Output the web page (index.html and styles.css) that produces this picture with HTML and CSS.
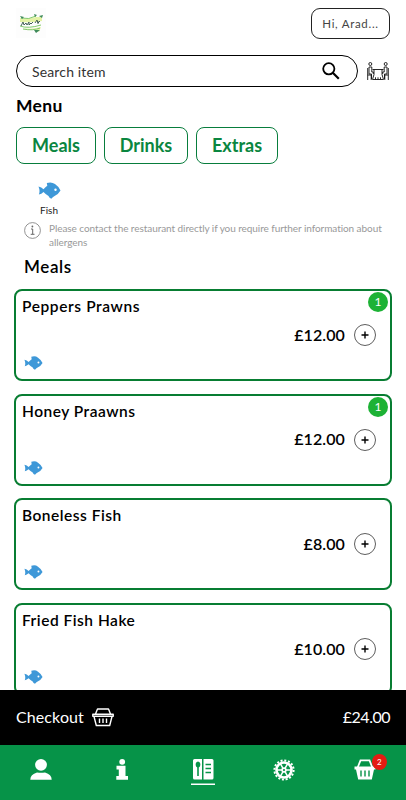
FILE: index.html
```html
<!DOCTYPE html>
<html lang="en">
<head>
<meta charset="utf-8">
<title>Menu</title>
<link rel="stylesheet" href="styles.css">
</head>
<body>
<svg class="defs" aria-hidden="true">
  <symbol id="fish" viewBox="0 0 22 17">
    <path fill="#3e98d8" d="M0 4.500Q3 5 5 7.200Q7 5 8.800 3.800L8.300 1Q13-.6 16.500 2Q20.300 4.500 22 8.500Q20 12 16.500 13.800Q14.500 14.800 12.800 16.700Q10.800 16 10 14Q7.200 12.400 5 10Q3 12 .4 12.500Q1.800 8.700 0 4.500Z"/>
    <circle cx="17" cy="7.800" r="1.200" fill="#fff"/>
  </symbol>
  <symbol id="plus" viewBox="0 0 22 22">
    <circle cx="11" cy="11" r="10.500" fill="none" stroke="#333" stroke-width=".8"/>
    <path d="M7.500 11h7M11 7.500v7" stroke="#000" stroke-width="1.400"/>
  </symbol>
</svg>
<div class="app">
  <header class="top">
    <svg class="logo" viewBox="0 0 30 30">
      <rect width="30" height="30" fill="#fdfdfd"/>
      <path d="M4 10Q11 12 20 9L26 9 26 13Q14 15 4 14ZM7 20Q14 22 25 19L23 24 20 21Q13 23 7 20Z" fill="#e4f2a5"/>
      <path d="M5 10Q13 12 20 8M4 18Q12 21 25 17M7 21Q17 23 24 20" fill="none" stroke="#82c96b"/>
      <path d="M4 8l4 1-2 2zM18 6l3 1-2 2zM23 8l4-1-1 3zM18 22l6 0-4 3z" fill="#3f8a5a"/>
      <path d="M5 18l2-4 1 3 2-2 1 2 2-3v3l2-2v1l2-2M19 15l2-3 1 3 2-2M22 13v3" fill="none" stroke="#35554b" stroke-width=".9"/>
    </svg>
    <button class="user">Hi, Arad...</button>
  </header>
  <div class="search-row">
    <div class="search"><span>Search item</span>
      <svg class="lens" viewBox="0 0 18 18"><circle cx="6.800" cy="6.800" r="5.600" fill="none" stroke="#000" stroke-width="1.800"/><path d="M10.800 10.800l6 6" stroke="#000" stroke-width="2.200"/></svg>
    </div>
    <svg class="table" viewBox="0 0 22 19" fill="none" stroke="#111" stroke-width=".9">
      <circle cx="3.300" cy="2" r="1.500"/><circle cx="18.700" cy="2" r="1.500"/>
      <path d="M2 5h2.800v5h1.500v2M2 5v7h2.500v5M.7 6v12M.7 13h3.500v5M20 5h-2.800v5h-1.500v2M20 5v7h-2.500v5M21.300 6v12M21.300 13h-3.500v5M5.500 7.500h11M7 7.500v5l-1.500 5h11L15 12.500v-5M8.500 17.300v-2M11 17.300v-2M13.500 17.300v-2"/>
    </svg>
  </div>
  <h1>Menu</h1>
  <nav class="tabs"><button class="tab meals">Meals</button><button class="tab drinks">Drinks</button><button class="tab extras">Extras</button></nav>
  <div class="allergen"><svg><use href="#fish"/></svg><span>Fish</span></div>
  <div class="notice">
    <svg viewBox="0 0 17 17"><circle cx="8.500" cy="8.500" r="7.900" fill="none" stroke="#777" stroke-width=".8"/><path d="M7 7h1.700v5M6.700 12.300h3.800" fill="none" stroke="#666"/><circle cx="8.400" cy="4.500" r=".9" fill="#666"/></svg>
    <p>Please contact the restaurant directly if you require further information about<br>allergens</p>
  </div>
  <h2>Meals</h2>
  <main class="list">
    <article class="card"><h3 class="wide">Peppers Prawns</h3><span class="count">1</span><div class="buy"><span>£12.00</span><svg><use href="#plus"/></svg></div><svg class="tag"><use href="#fish"/></svg></article>
    <article class="card"><h3>Honey Praawns</h3><span class="count">1</span><div class="buy"><span>£12.00</span><svg><use href="#plus"/></svg></div><svg class="tag"><use href="#fish"/></svg></article>
    <article class="card"><h3>Boneless Fish</h3><div class="buy"><span>£8.00</span><svg><use href="#plus"/></svg></div><svg class="tag"><use href="#fish"/></svg></article>
    <article class="card"><h3>Fried Fish Hake</h3><div class="buy"><span>£10.00</span><svg><use href="#plus"/></svg></div><svg class="tag"><use href="#fish"/></svg></article>
  </main>
  <div class="checkout">
    <span class="checkout-label">Checkout</span>
    <svg viewBox="0 0 22 19" fill="none" stroke="#fff" stroke-width="1.400" stroke-linejoin="round"><path d="M3.500 6L5.500 1h11l2 5M.8 6.300h20.400v2H.8zM2 8.500l2.300 9h13.400l2.300-9M7.500 10.500v4.500M11 10.500v4.500M14.500 10.500v4.500"/></svg>
    <span class="total">£24.00</span>
  </div>
  <footer class="bottom">
    <a><svg viewBox="0 0 24 30" fill="#fff"><circle cx="12" cy="9.800" r="5.900"/><path d="M1.300 24.700Q1.300 19.500 8 17.500Q12 18.200 16 17.500Q22.700 19.500 22.700 24.700Z"/></svg></a>
    <a><svg viewBox="0 0 24 30" fill="#fff"><circle cx="12.200" cy="6.800" r="2.900"/><path d="M6.500 10.800h9v10.200H18v3.800H6.300V21h2.500v-6.500H6.500z"/></svg></a>
    <a><svg viewBox="0 0 24 30"><path d="M3.500 4H11v20.500H3.500Q2 24.500 2 23V5.500Q2 4 3.500 4zM12.500 4H21Q22.500 4 22.500 5.500V23Q22.500 24.500 21 24.500H12.500zM0 28.500h24v1.500H0z" fill="#fff"/><path d="M14.500 9.500h5.500M14.500 13.500h5.500M14.500 17.500h5.500M7 11v10" stroke="#069348" stroke-width="1.600"/><ellipse cx="7" cy="9.500" rx="2.300" ry="3" fill="#069348"/></svg></a>
    <a><svg viewBox="0 0 24 30" fill="none" stroke="#fff"><circle cx="12" cy="15" r="9.600" stroke-width="2" stroke-dasharray="2 1.770"/><circle cx="12" cy="15" r="7.500" stroke-width="2.600"/><circle cx="12" cy="15" r="1.900" stroke-width="1.600"/><path d="M14 15h5M13 16.730l2.500 4.330M11 16.730l-2.500 4.330M10 15H5M11 13.270L8.500 8.940M13 13.270l2.500-4.330" stroke-width="1.500"/></svg></a>
    <a class="basket"><svg viewBox="0 0 24 30"><path d="M4.500 13L7.500 5.300h9l3 7.700" fill="none" stroke="#fff" stroke-width="1.800"/><path d="M1.500 11.500h21v3H21l-2.200 10H5.200L3 14.500H1.500z" fill="#fff"/><path d="M8 15.500v6M12 15.500v6M16 15.500v6" stroke="#069348" stroke-width="1.400"/></svg><b>2</b></a>
  </footer>
</div>
</body>
</html>
```
FILE: styles.css
```css
* { box-sizing: border-box; }
body { margin: 0; background: #fff; color: #000; font-family: Lato, "Liberation Sans", sans-serif; }
h1, h2, h3, p { margin: 0; }
button { background: #fff; font-family: inherit; padding: 0; }
svg { display: block; flex: none; }
.defs { position: absolute; width: 0; height: 0; }
.app { height: 800px; display: flex; flex-direction: column; overflow: hidden; }
.top { height: 55px; flex: none; display: flex; justify-content: space-between; padding: 8px 16px 0; }
.logo { width: 30px; height: 30px; }
.user { width: 79px; height: 31px; border: 1px solid #222; border-radius: 9px; font-size: 11.5px; letter-spacing: .7px; color: #444; }
.search-row { display: flex; height: 32px; flex: none; padding: 0 16px; }
.search { width: 342px; border: 1px solid #000; border-radius: 16px; padding: 0 17px 0 15px; display: flex; align-items: center; justify-content: space-between; font-size: 14px; letter-spacing: .15px; color: #333; }
.lens { width: 18px; height: 18px; }
.table { width: 22px; height: 19px; margin: 7px 0 0 9px; }
h1 { font-size: 17.5px; line-height: 22px; height: 40px; flex: none; padding: 8px 16px 0; letter-spacing: .3px; font-weight: 700; }
.tabs { display: flex; gap: 8px; padding: 0 16px; height: 37px; flex: none; }
.tab { border: 1px solid #087d3d; border-radius: 8px; color: #0a8640; font-size: 18px; font-weight: 700; padding-bottom: 1px; }
.meals { width: 80px; }
.drinks { width: 84px; }
.extras { width: 82px; }
.allergen { width: 50px; margin: 18px 0 0 24px; height: 40px; flex: none; display: flex; flex-direction: column; align-items: center; font-size: 10px; line-height: 12px; gap: 5px; color: #222; }
.allergen svg { width: 23px; height: 17px; }
.notice { display: flex; gap: 8px; padding-left: 24px; height: 33px; flex: none; color: #999; font-size: 10px; line-height: 13.5px; letter-spacing: -.065px; }
.notice svg { width: 17px; height: 17px; }
h2 { font-size: 17px; line-height: 22px; height: 34px; flex: none; padding: 1px 24px 0; letter-spacing: .6px; font-weight: 600; }
.list { flex: 1; min-height: 0; overflow: hidden; display: flex; flex-direction: column; gap: 12.7px; padding: 0 14px; }
.card { position: relative; flex: none; height: 92px; border: 2px solid #087d32; border-radius: 8px; padding: 5px 6px; }
h3 { font-size: 15.5px; line-height: 20px; font-weight: 600; letter-spacing: .5px; }
.wide { letter-spacing: .6px; }
.count { position: absolute; right: 2px; top: 1px; width: 20px; height: 20px; border-radius: 50%; background: #1db235; color: #fff; font-size: 12px; line-height: 20px; text-align: center; }
.buy { display: flex; height: 22px; margin: 8px 8px 0 0; align-items: center; justify-content: flex-end; gap: 9px; font-size: 16px; font-weight: 600; letter-spacing: .1px; }
.buy span { padding-bottom: 2px; }
.buy svg { width: 22px; height: 22px; }
.tag { width: 19px; height: 14px; margin: 10px 0 0 2px; }
.checkout { height: 55px; flex: none; background: #000; color: #fff; display: flex; align-items: center; padding: 0 16px; font-size: 16px; }
.checkout svg { width: 22px; height: 19px; margin-left: 8px; }
.checkout span { padding-bottom: 2px; }
.checkout-label { letter-spacing: .1px; }
.total { margin-left: auto; letter-spacing: -.5px; }
.bottom { height: 55px; flex: none; background: #069348; display: flex; }
.bottom a { width: 81.2px; display: flex; justify-content: center; padding-top: 10px; position: relative; }
.bottom a svg { width: 24px; height: 30px; }
.basket b { position: absolute; left: 47px; top: 9px; width: 15px; height: 16px; border-radius: 50%; background: #e51b12; color: #fff; font-size: 8px; line-height: 16px; font-weight: 400; text-align: center; }
```
